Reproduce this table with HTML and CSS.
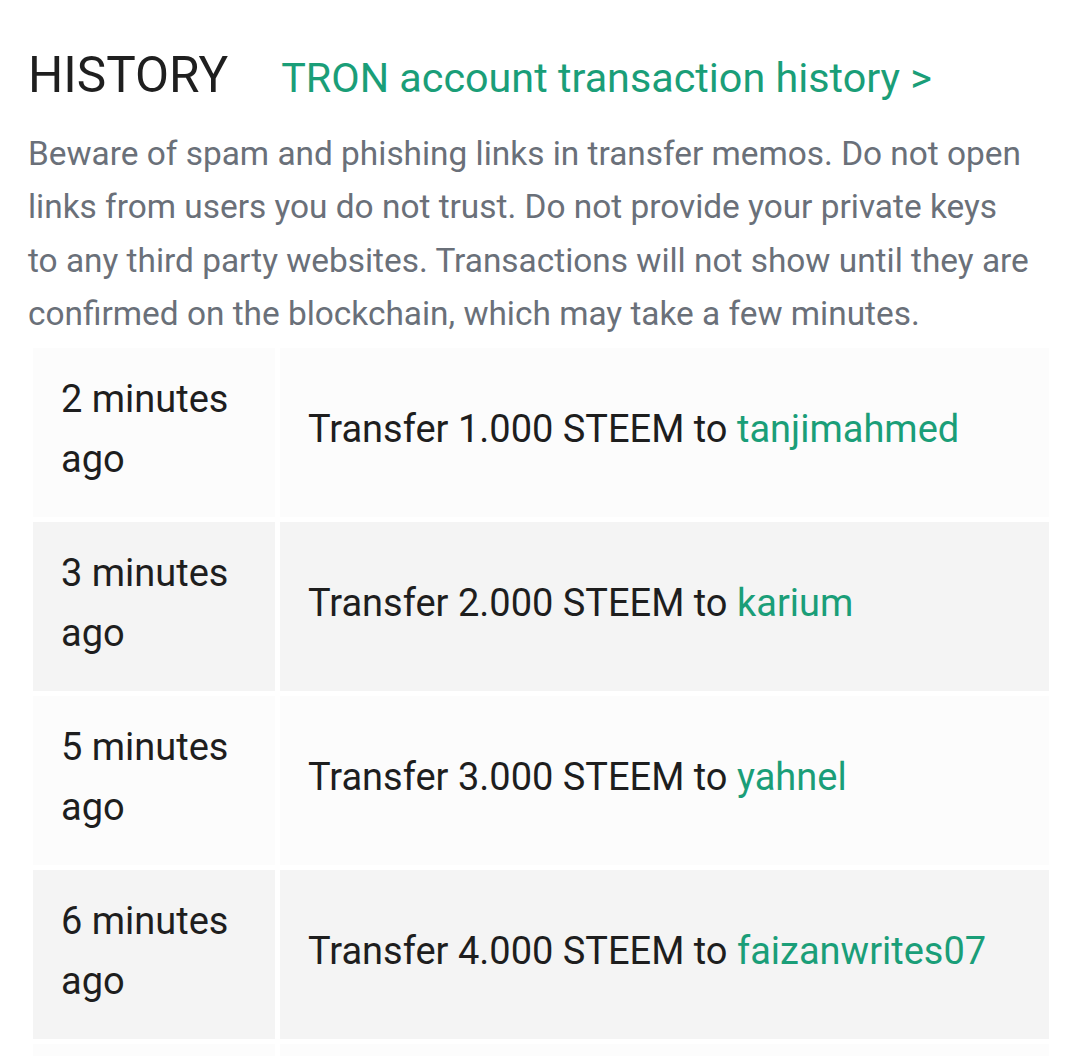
FILE: index.html
```html
<!DOCTYPE html>
<html lang="en">
<head>
<meta charset="UTF-8">
<meta name="viewport" content="width=device-width, initial-scale=1.0">
<link rel="stylesheet" href="styles.css">
<title>History</title>
</head>
<body>

<div id="history">
  <div class="header">
    <h2>HISTORY</h2>
    <a class="link" href="#">TRON account transaction history &gt;</a>
  </div>

  <p class="notice">Beware of spam and phishing links in transfer memos. Do not open links from users you do not trust. Do not provide your private keys to any third party websites. Transactions will not show until they are confirmed on the blockchain, which may take a few minutes.</p>

  <table class="transfers">
    <tbody>
      <tr>
        <td class="when">2 minutes ago</td>
        <td class="what">Transfer 1.000 STEEM to <a href="#">tanjimahmed</a></td>
      </tr>
      <tr>
        <td class="when">3 minutes ago</td>
        <td class="what">Transfer 2.000 STEEM to <a href="#">karium</a></td>
      </tr>
      <tr>
        <td class="when">5 minutes ago</td>
        <td class="what">Transfer 3.000 STEEM to <a href="#">yahnel</a></td>
      </tr>
      <tr>
        <td class="when">6 minutes ago</td>
        <td class="what">Transfer 4.000 STEEM to <a href="#">faizanwrites07</a></td>
      </tr>
      <tr>
        <td class="when">7 minutes ago</td>
        <td class="what">Transfer 5.000 STEEM to <a href="#">rme</a></td>
      </tr>
    </tbody>
  </table>
</div>

</body>
</html>
```

FILE: styles.css
```css
body {
  margin: 0;
  background-color: #fff;
  font-family: Roboto, "Liberation Sans", sans-serif;
  color: #1e1e1e;
  overflow: hidden;
  height: 1056px;
}
#history {
  padding: 39px 26px 0 28px;
}
.header {
  display: flex;
  align-items: baseline;
  gap: 53px;
}
h2 {
  margin: 0;
  font-size: 49.5px;
  font-weight: 400;
  line-height: 72px;
  color: #1f1f1f;
}
a {
  color: #1a9e78;
  text-decoration: none;
}
.link {
  font-size: 41.3px;
}
.notice {
  margin: 16px 22px 3px 0;
  font-size: 33.4px;
  line-height: 53.3px;
  color: #6a7079;
}
.transfers {
  border-spacing: 5px;
  width: 1026px;
  font-size: 38px;
}
.transfers td {
  padding: 21px 28px 28px;
  line-height: 60px;
  vertical-align: middle;
}
.transfers tr:nth-child(odd) td {
  background-color: #fcfcfc;
}
.transfers tr:nth-child(even) td {
  background-color: #f4f4f4;
}
.when {
  width: 186px;
}
```
